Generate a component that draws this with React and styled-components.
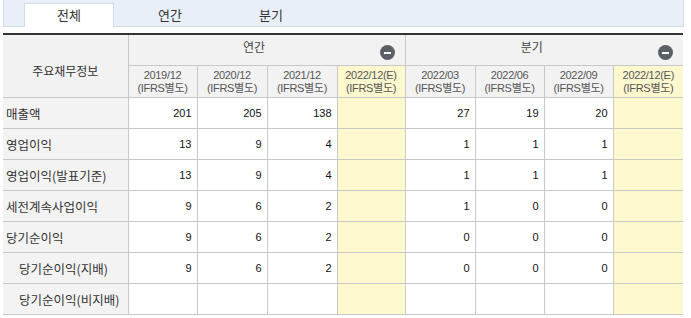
import React from "react";
import styled, { createGlobalStyle } from "styled-components";

const Global = createGlobalStyle`
  html, body { margin: 0; padding: 0; background: #fff; }
  body { font-family: "Noto Sans CJK KR", "Noto Sans", sans-serif; color: #333; }
`;

const Wrap = styled.div`
  margin-left: 3px;
  width: 681px;
`;

const TabBar = styled.div`
  display: flex;
  align-items: flex-end;
  gap: 11px;
  height: 26px;
  padding-left: 20px;
  background: #e9eff8;
  border: 1px solid #d2dbe8;
  border-top: none;
  box-sizing: content-box;
`;

const Tab = styled.div`
  width: 90px;
  height: 24px;
  box-sizing: border-box;
  display: flex;
  align-items: center;
  justify-content: center;
  padding-bottom: 2px;
  font-size: 13px;
  color: #333;
  margin-bottom: -1px;
  background: ${(p) => (p.$active ? "#fff" : "transparent")};
  border: 1px solid ${(p) => (p.$active ? "#d2dbe8" : "transparent")};
  border-bottom: none;
`;

const Table = styled.table`
  margin-top: 6px;
  width: 680px;
  table-layout: fixed;
  border-collapse: collapse;
  border-top: 2px solid #333;
`;

const Th = styled.th`
  background: ${(p) => (p.$yellow ? "#fef8cf" : "#f2f2f2")};
  border: 1px solid #c8c8c8;
  font-weight: normal;
  padding: 0;
  color: #444;
  &:first-child { border-left: none; }
  &:last-child { border-right: none; }
`;

const LabelHead = styled(Th)`
  font-size: 12px;
  color: #333;
  padding-top: 8px;
`;

const GroupHead = styled(Th)`
  height: 30px;
  vertical-align: top;
  border-right: none;
`;

const GroupInner = styled.div`
  display: flex;
  align-items: flex-start;
`;

const GroupTitle = styled.span`
  flex: 1;
  text-align: center;
  font-size: 12px;
  line-height: 14px;
  padding-top: 5px;
  color: #444;
`;

const Minus = styled.span`
  width: 15px;
  height: 15px;
  border-radius: 50%;
  background: #5b6067;
  margin: 10px 10px 0 0;
  display: flex;
  align-items: center;
  justify-content: center;
  &::after {
    content: "";
    width: 7px;
    height: 2px;
    background: #fff;
  }
`;

const DateHead = styled(Th)`
  height: 31px;
  font-family: "Liberation Sans", "Noto Sans CJK KR", sans-serif;
  font-size: 11px;
  color: #555;
  letter-spacing: -0.3px;
  white-space: nowrap;
`;

const DateLine = styled.div`
  line-height: 13px;
`;

const Td = styled.td`
  height: 30px;
  border: 1px solid #c8c8c8;
  background: ${(p) => (p.$yellow ? "#fef8cf" : "#fff")};
  text-align: right;
  padding: 0 5px 0 0;
  font-family: "Liberation Sans", Arial, sans-serif;
  font-size: 11px;
  color: #111;
  &:last-child { border-right: none; }
`;

const LabelTd = styled.td`
  height: 30px;
  border: 1px solid #c8c8c8;
  border-left: none;
  background: #f3f3f3;
  padding: 0 0 0 ${(p) => (p.$indent ? 16 : 3)}px;
  font-size: 12.5px;
  color: #333;
  white-space: nowrap;
`;

const widths = [125, 69, 70, 70, 68, 70, 69, 69, 70];
const dates = [
  ["2019/12", false],
  ["2020/12", false],
  ["2021/12", false],
  ["2022/12(E)", true],
  ["2022/03", false],
  ["2022/06", false],
  ["2022/09", false],
  ["2022/12(E)", true],
];
const rows = [
  ["매출액", false, ["201", "205", "138", "", "27", "19", "20", ""]],
  ["영업이익", false, ["13", "9", "4", "", "1", "1", "1", ""]],
  ["영업이익(발표기준)", false, ["13", "9", "4", "", "1", "1", "1", ""]],
  ["세전계속사업이익", false, ["9", "6", "2", "", "1", "0", "0", ""]],
  ["당기순이익", false, ["9", "6", "2", "", "0", "0", "0", ""]],
  ["당기순이익(지배)", true, ["9", "6", "2", "", "0", "0", "0", ""]],
  ["당기순이익(비지배)", true, ["", "", "", "", "", "", "", ""]],
];

export default function App() {
  return (
    <Wrap>
      <Global />
      <TabBar>
        <Tab $active>전체</Tab>
        <Tab>연간</Tab>
        <Tab>분기</Tab>
      </TabBar>
      <Table>
        <colgroup>
          {widths.map((w, i) => (
            <col key={i} style={{ width: w }} />
          ))}
        </colgroup>
        <thead>
          <tr>
            <LabelHead rowSpan={2}>주요재무정보</LabelHead>
            <GroupHead colSpan={4}>
              <GroupInner>
                <GroupTitle>연간</GroupTitle>
                <Minus />
              </GroupInner>
            </GroupHead>
            <GroupHead colSpan={4}>
              <GroupInner>
                <GroupTitle>분기</GroupTitle>
                <Minus />
              </GroupInner>
            </GroupHead>
          </tr>
          <tr>
            {dates.map(([d, y], i) => (
              <DateHead key={i} $yellow={y}>
                <DateLine>{d}</DateLine>
                <DateLine>(IFRS별도)</DateLine>
              </DateHead>
            ))}
          </tr>
        </thead>
        <tbody>
          {rows.map(([label, indent, vals], r) => (
            <tr key={r}>
              <LabelTd $indent={indent}>{label}</LabelTd>
              {vals.map((v, i) => (
                <Td key={i} $yellow={dates[i][1]}>
                  {v}
                </Td>
              ))}
            </tr>
          ))}
        </tbody>
      </Table>
    </Wrap>
  );
}
